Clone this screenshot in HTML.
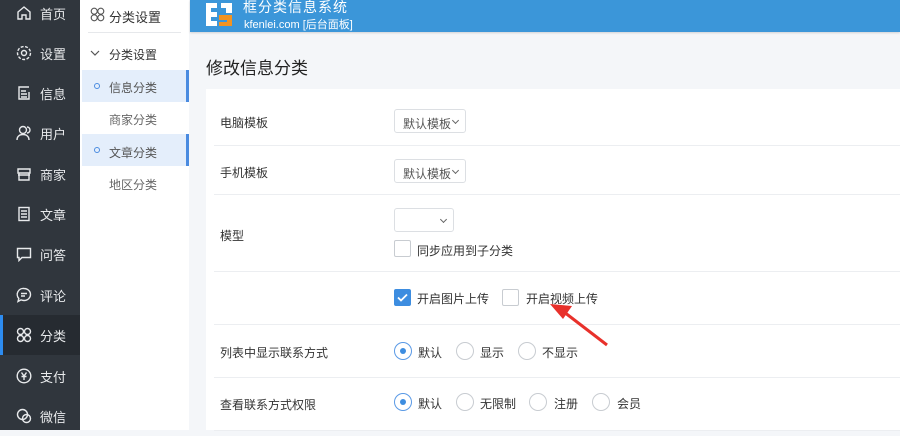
<!DOCTYPE html>
<html><head><meta charset="utf-8"><style>
*{margin:0;padding:0;box-sizing:border-box}
body{width:900px;height:430px;overflow:hidden;background:#f4f6f9;font-family:"Liberation Sans","Noto Sans CJK SC",sans-serif;position:relative;color:#333}
.nav{position:absolute;left:0;top:0;width:80px;height:430px;background:#30363d}
.nav .it{position:absolute;left:0;width:80px;height:40px;color:#e8eaec;font-size:13px}
.nav .it svg{position:absolute;left:16px;top:12px}
.nav .it span{position:absolute;left:40px;top:11px}
.nav .act{background:#262b31;border-left:3px solid #2d8cf0}
.side{position:absolute;left:80px;top:0;width:109px;height:430px;background:#fff}
.side .t{position:absolute;font-size:12px;color:#333}
.side .hl{position:absolute;left:2px;width:107px;height:32px;background:#e4eefb;border-right:3px solid #4a8be0}
.hdr{position:absolute;left:190px;top:0;width:710px;height:32px;background:#3b96d9;box-shadow:0 1px 2px rgba(0,0,0,.15)}
.card{position:absolute;left:206px;top:89px;width:694px;height:341px;background:#fff}
.row{position:absolute;left:8px;right:0;border-bottom:1px solid #eceef1}
.lbl{position:absolute;left:6px;font-size:12px;color:#333}
.sel{position:absolute;left:180px;width:72px;height:24px;border:1px solid #dcdfe3;border-radius:3px;font-size:12px;color:#555;padding:5px 0 0 8px}
.sel:after{content:"";position:absolute;right:7px;top:8px;width:4px;height:4px;border-right:1px solid #666;border-bottom:1px solid #666;transform:rotate(45deg)}
.cb{position:absolute;width:17px;height:17px;border:1px solid #c8ccd1;border-radius:2px;background:#fff}
.cb.on{background:#3d8de0;border-color:#3d8de0}
.rd{position:absolute;width:18px;height:18px;border:1px solid #c8ccd1;border-radius:50%}
.rd.on{border-color:#5a9ae6}
.rd.on:after{content:"";position:absolute;left:5px;top:5px;width:6px;height:6px;border-radius:50%;background:#3d8de0}
.tx{position:absolute;font-size:12px;color:#333}
</style></head><body>
<div class="nav">
<div class="it" style="top:-7px"><svg width="16" height="16" viewBox="0 0 16 16" fill="none" stroke="#e8eaec" stroke-width="1.4"><path d="M2 7L8 2l6 5v7H10V10H6v4H2z"/></svg><span>首页</span></div>
<div class="it" style="top:33px"><svg width="16" height="16" viewBox="0 0 16 16" fill="none" stroke="#e8eaec" stroke-width="1.4"><circle cx="8" cy="8" r="2.5"/><circle cx="8" cy="8" r="6.5" stroke-dasharray="3 1.5"/></svg><span>设置</span></div>
<div class="it" style="top:73px"><svg width="16" height="16" viewBox="0 0 16 16" fill="none" stroke="#e8eaec" stroke-width="1.4"><path d="M13 2H3v12h10V7M5 6h5M5 9h6M5 12h6"/></svg><span>信息</span></div>
<div class="it" style="top:113px"><svg width="16" height="16" viewBox="0 0 16 16" fill="none" stroke="#e8eaec" stroke-width="1.4"><circle cx="7" cy="5" r="3.5"/><path d="M1 15c0-4 3-5.5 6-5.5s6 1.5 6 5.5M11 2a3 3 0 010 6"/></svg><span>用户</span></div>
<div class="it" style="top:154px"><svg width="16" height="16" viewBox="0 0 16 16" fill="none" stroke="#e8eaec" stroke-width="1.4"><path d="M2 3h12v4H2zM3 7v7h10V7M2 9h12"/></svg><span>商家</span></div>
<div class="it" style="top:194px"><svg width="16" height="16" viewBox="0 0 16 16" fill="none" stroke="#e8eaec" stroke-width="1.4"><rect x="3" y="1.5" width="10" height="13"/><path d="M5 5h6M5 8h6M5 11h6"/></svg><span>文章</span></div>
<div class="it" style="top:234px"><svg width="16" height="16" viewBox="0 0 16 16" fill="none" stroke="#e8eaec" stroke-width="1.4"><path d="M1.5 2.5h13v9H6l-3 3v-3H1.5z"/></svg><span>问答</span></div>
<div class="it" style="top:275px"><svg width="16" height="16" viewBox="0 0 16 16" fill="none" stroke="#e8eaec" stroke-width="1.4"><path d="M8 1.5a6.5 6 0 110 12c-1 0-2-.2-3-.6L2 14.5l.8-3A6 6 0 018 1.5zM5 6.5h6M5 9h4"/></svg><span>评论</span></div>
<div class="it act" style="top:315px"><svg width="16" height="16" viewBox="0 0 16 16" fill="none" stroke="#e8eaec" stroke-width="1.4" style="left:13px"><circle cx="4.5" cy="4.5" r="3"/><circle cx="11.5" cy="4.5" r="3"/><circle cx="4.5" cy="11.5" r="3"/><circle cx="11.5" cy="11.5" r="3"/></svg><span style="left:37px">分类</span></div>
<div class="it" style="top:356px"><svg width="16" height="16" viewBox="0 0 16 16" fill="none" stroke="#e8eaec" stroke-width="1.4"><circle cx="8" cy="8" r="6.8"/><path d="M5.5 4.5L8 8l2.5-3.5M8 8v4M5.5 8.5h5"/></svg><span>支付</span></div>
<div class="it" style="top:396px"><svg width="16" height="16" viewBox="0 0 16 16" fill="none" stroke="#e8eaec" stroke-width="1.4"><circle cx="6.5" cy="6.5" r="5"/><circle cx="10.5" cy="10.5" r="4"/></svg><span>微信</span></div>
</div>
<div class="side">
<svg style="position:absolute;left:10px;top:7px" width="15" height="15" viewBox="0 0 16 16" fill="none" stroke="#555" stroke-width="1.2"><circle cx="4.5" cy="4.5" r="3.2"/><circle cx="11.5" cy="4.5" r="3.2"/><circle cx="4.5" cy="11.5" r="3.2"/><circle cx="11.5" cy="11.5" r="3.2"/></svg>
<div class="t" style="left:29px;top:7px;font-size:13px;color:#333">分类设置</div>
<div style="position:absolute;left:8px;top:32px;width:93px;height:1px;background:#e6e8eb"></div>
<svg style="position:absolute;left:10px;top:50px" width="10" height="7" viewBox="0 0 10 7"><path d="M1 1l4 4 4-4" fill="none" stroke="#555" stroke-width="1.2"/></svg>
<div class="t" style="left:29px;top:46px">分类设置</div>
<div class="hl" style="top:70px"></div>
<div class="hl" style="top:134px"></div>
<div style="position:absolute;left:14px;top:83px;width:6px;height:6px;border:1px solid #4a8be0;border-radius:50%"></div>
<div style="position:absolute;left:14px;top:147px;width:6px;height:6px;border:1px solid #4a8be0;border-radius:50%"></div>
<div class="t" style="left:29px;top:79px;color:#555">信息分类</div>
<div class="t" style="left:29px;top:111px;color:#666">商家分类</div>
<div class="t" style="left:29px;top:144px;color:#555">文章分类</div>
<div class="t" style="left:29px;top:176px;color:#666">地区分类</div>
</div>
<div class="hdr">
<svg style="position:absolute;left:14px;top:1px" width="30" height="27" viewBox="0 0 30 27"><path d="M2 2h11v5H7v4h6v5H7v4h6v5H2z" fill="#fff"/><path d="M17 2h11v10H22V7h-5z" fill="#fff"/><path d="M15 14h13v11H15v-4h8v-2h-8z" fill="#f39321"/></svg>
<div style="position:absolute;left:53px;top:-3px;color:#fff;font-size:14px;letter-spacing:1px">框分类信息系统</div>
<div style="position:absolute;left:54px;top:16px;color:#fff;font-size:11px">kfenlei.com [后台面板]</div>
</div>
<div style="position:absolute;left:206px;top:54px;font-size:17px;color:#222">修改信息分类</div>
<div class="card">
<div class="row" style="top:0;height:57px"><div class="lbl" style="top:25px">电脑模板</div><div class="sel" style="top:20px">默认模板</div></div>
<div class="row" style="top:57px;height:49px"><div class="lbl" style="top:18px">手机模板</div><div class="sel" style="top:13px">默认模板</div></div>
<div class="row" style="top:106px;height:77px"><div class="lbl" style="top:32px">模型</div>
<div class="sel" style="top:13px;width:60px"></div>
<div class="cb" style="left:180px;top:45px"></div><div class="tx" style="left:203px;top:47px">同步应用到子分类</div></div>
<div class="row" style="top:183px;height:53px">
<div class="cb on" style="left:180px;top:17px"><svg width="15" height="15" viewBox="0 0 15 15" style="position:absolute;left:0;top:0"><path d="M3 7.5l3 3 6-6" fill="none" stroke="#fff" stroke-width="1.8"/></svg></div>
<div class="tx" style="left:203px;top:18px">开启图片上传</div>
<div class="cb" style="left:288px;top:17px"></div><div class="tx" style="left:312px;top:18px">开启视频上传</div></div>
<div class="row" style="top:236px;height:53px"><div class="lbl" style="top:19px">列表中显示联系方式</div>
<div class="rd on" style="left:180px;top:17px"></div><div class="tx" style="left:204px;top:19px">默认</div>
<div class="rd" style="left:242px;top:17px"></div><div class="tx" style="left:266px;top:19px">显示</div>
<div class="rd" style="left:304px;top:17px"></div><div class="tx" style="left:328px;top:19px">不显示</div></div>
<div class="row" style="top:289px;height:53px"><div class="lbl" style="top:18px">查看联系方式权限</div>
<div class="rd on" style="left:180px;top:15px"></div><div class="tx" style="left:204px;top:17px">默认</div>
<div class="rd" style="left:242px;top:15px"></div><div class="tx" style="left:266px;top:17px">无限制</div>
<div class="rd" style="left:315px;top:15px"></div><div class="tx" style="left:340px;top:17px">注册</div>
<div class="rd" style="left:378px;top:15px"></div><div class="tx" style="left:403px;top:17px">会员</div></div>
</div>
<svg style="position:absolute;left:540px;top:300px" width="70" height="50" viewBox="0 0 70 50"><path d="M67 45L24 12" stroke="#e8312b" stroke-width="3"/><path d="M10 4l22 2-9 13z" fill="#e8312b"/></svg>
</body></html>
